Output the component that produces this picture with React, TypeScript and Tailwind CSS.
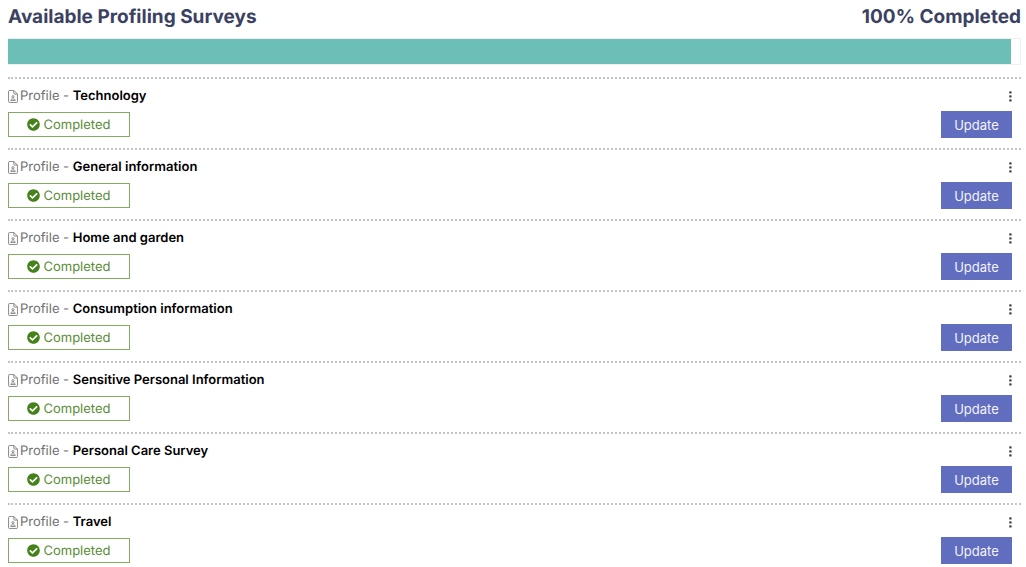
import { FaCheckCircle } from 'react-icons/fa';

type Survey = {
  id: string;
  name: string;
};

const surveys: Survey[] = [
  { id: 'technology', name: 'Technology' },
  { id: 'general', name: 'General information' },
  { id: 'home', name: 'Home and garden' },
  { id: 'consumption', name: 'Consumption information' },
  { id: 'sensitive', name: 'Sensitive Personal Information' },
  { id: 'care', name: 'Personal Care Survey' },
  { id: 'travel', name: 'Travel' },
];

function FileUserIcon() {
  return (
    <svg viewBox="0 0 384 512" className="h-[13px] w-[10px] shrink-0" fill="none" stroke="currentColor" strokeWidth="32" aria-hidden="true">
      <path d="M64 17h160l143 143v288a47 47 0 0 1-47 47H64a47 47 0 0 1-47-47V64a47 47 0 0 1 47-47z" />
      <path d="M224 17v111a32 32 0 0 0 32 32h111" />
      <circle cx="192" cy="264" r="42" />
      <path d="M104 416c0-38 22-62 52-62h72c30 0 52 24 52 62z" strokeLinejoin="round" />
    </svg>
  );
}

function DotsIcon() {
  return (
    <svg viewBox="0 0 3 11" className="h-[11px] w-[3px]" fill="currentColor" aria-hidden="true">
      <rect x="0.2" y="0.2" width="2.4" height="2.4" rx="0.7" />
      <rect x="0.2" y="4.2" width="2.4" height="2.4" rx="0.7" />
      <rect x="0.2" y="8.2" width="2.4" height="2.4" rx="0.7" />
    </svg>
  );
}

function SurveyRow({ survey }: { survey: Survey }) {
  return (
    <li className="border-t-2 border-dotted border-[#c4c4c4] pt-[7px] pr-[9px] pb-[10px]">
      <div className="flex h-5 items-center justify-between">
        <h2 className="flex items-center gap-0.5 text-[13px] leading-5 text-[#707070]">
          <FileUserIcon />
          <span>
            Profile - <strong className="font-semibold text-black">{survey.name}</strong>
          </span>
        </h2>
        <button type="button" aria-label={`Options for ${survey.name}`} className="text-[#444]">
          <DotsIcon />
        </button>
      </div>
      <div className="mt-[5px] flex items-center justify-between">
        <span className="flex h-[25px] w-[122px] items-center justify-center gap-[3px] border border-[#82ad60] text-[13px] leading-5 text-[#588c35]">
          <FaCheckCircle className="size-[13px] text-[#46821b]" aria-hidden="true" />
          Completed
        </span>
        <button type="button" className="h-[27px] w-[71px] bg-[#616dbf] text-[13px] leading-5 text-[#f2f3fb]">
          Update
        </button>
      </div>
    </li>
  );
}

export default function App() {
  return (
    <main className="bg-white pt-1 pr-[5px] pl-2 font-['Inter',sans-serif] [text-rendering:geometricPrecision]">
      <header className="flex items-center justify-between text-[19px] leading-[26px] font-bold text-[#3b4162]">
        <h1>Available Profiling Surveys</h1>
        <p>100% Completed</p>
      </header>

      <div
        role="progressbar"
        aria-label="Profiling surveys completed"
        aria-valuenow={100}
        className="mt-2 h-[27px] border border-l-0 border-[#f0f0f0] pr-[9px]"
      >
        <div className="h-full bg-[#6bbfb6]" />
      </div>

      <ul className="mt-3">
        {surveys.map((survey) => (
          <SurveyRow key={survey.id} survey={survey} />
        ))}
      </ul>
    </main>
  );
}
